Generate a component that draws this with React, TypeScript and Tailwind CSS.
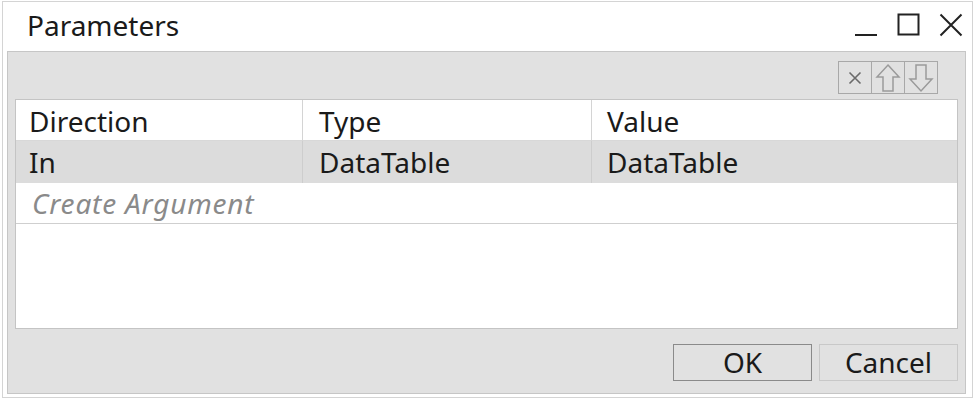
import { useState } from 'react'

const FONT = { fontFamily: '"Noto Sans", "Open Sans", sans-serif' }

const ROWS = [{ direction: 'In', type: 'DataTable', value: 'DataTable' }]

function ToolButton({ children }: { children: React.ReactNode }) {
    return (
        <div className="w-[34px] h-[33px] border border-[#a8a8a8] flex items-center justify-center -ml-px first:ml-0">
            {children}
        </div>
    )
}

export default function App() {
    const [rows] = useState(ROWS)

    return (
        <div className="w-[975px] h-[399px] bg-white pt-[1px] pl-[2px] pr-[2px] pb-[1px]" style={FONT}>
            <div className="h-full border border-[#d4d4d4] flex flex-col">
                {/* title bar */}
                <div className="h-[49px] flex items-center pl-[24px] pr-[9px] text-[28px] text-[#1a1a1a]">
                    <span className="leading-none -mt-[3px]">Parameters</span>
                    <div className="ml-auto flex items-center gap-[19px] -mt-[3px]">
                        <svg width="23" height="24" viewBox="0 0 23 24">
                            <line x1="0" y1="22" x2="22" y2="22" stroke="#222" strokeWidth="2" />
                        </svg>
                        <svg width="23" height="24" viewBox="0 0 23 24">
                            <rect x="1.5" y="1.5" width="20" height="20" fill="none" stroke="#222" strokeWidth="2" />
                        </svg>
                        <svg width="24" height="24" viewBox="0 0 24 24">
                            <path d="M1.5 1.5 L22.5 22.5 M22.5 1.5 L1.5 22.5" stroke="#222" strokeWidth="2" />
                        </svg>
                    </div>
                </div>

                {/* panel */}
                <div className="flex-1 ml-[4px] mr-[6px] mb-[3px] border border-[#c6c6c6] bg-[#e1e1e1] flex flex-col">
                    <div className="h-[47px] flex items-start justify-end pt-[9px] pr-[27px]">
                        <div className="flex">
                            <ToolButton>
                                <svg width="16" height="16" viewBox="0 0 16 16">
                                    <path d="M2.5 2.5 L13.5 13.5 M13.5 2.5 L2.5 13.5" stroke="#6a6a6a" strokeWidth="1.6" />
                                </svg>
                            </ToolButton>
                            <ToolButton>
                                <svg width="26" height="30" viewBox="0 0 26 30">
                                    <path d="M13 2 L24 14 L18 14 L18 28 L8 28 L8 14 L2 14 Z" fill="none" stroke="#9a9a9a" strokeWidth="1.5" strokeLinejoin="miter" />
                                </svg>
                            </ToolButton>
                            <ToolButton>
                                <svg width="26" height="30" viewBox="0 0 26 30">
                                    <path d="M8 2 L18 2 L18 16 L24 16 L13 28 L2 16 L8 16 Z" fill="none" stroke="#9a9a9a" strokeWidth="1.5" strokeLinejoin="miter" />
                                </svg>
                            </ToolButton>
                        </div>
                    </div>

                    {/* table */}
                    <div className="h-[230px] ml-[7px] mr-[7px] bg-white border border-[#c4c4c4] text-[28px] text-[#1a1a1a] flex flex-col">
                        <div className="grid grid-cols-[287px_289px_1fr] h-[41px] border-b border-[#d8d8d8]">
                            <div className="pl-[13px] flex items-center border-r border-[#d4d4d4]">Direction</div>
                            <div className="pl-[16px] flex items-center border-r border-[#d4d4d4]">Type</div>
                            <div className="pl-[15px] flex items-center">Value</div>
                        </div>
                        {rows.map((row, i) => (
                            <div key={i} className="grid grid-cols-[287px_289px_1fr] h-[42px] bg-[#dcdcdc]">
                                <div className="pl-[13px] flex items-center border-r border-[#cdcdcd]">{row.direction}</div>
                                <div className="pl-[16px] flex items-center border-r border-[#cdcdcd]">{row.type}</div>
                                <div className="pl-[15px] flex items-center">{row.value}</div>
                            </div>
                        ))}
                        <div className="h-[41px] pl-[16px] flex items-center italic text-[28px] tracking-[0.8px] text-[#8a8a8a] border-b border-[#cfcfcf]">
                            Create Argument
                        </div>
                    </div>

                    {/* footer */}
                    <div className="flex-1 flex items-center justify-end gap-[7px] pr-[7px] pt-[2px]">
                        <button className="w-[139px] h-[37px] border border-[#8a8a8a] bg-[#e1e1e1] text-[28px] leading-none text-[#1a1a1a] flex items-center justify-center">
                            OK
                        </button>
                        <button className="w-[139px] h-[37px] border border-[#c8c8c8] bg-[#e1e1e1] text-[28px] leading-none text-[#1a1a1a] flex items-center justify-center">
                            Cancel
                        </button>
                    </div>
                </div>
            </div>
        </div>
    )
}
